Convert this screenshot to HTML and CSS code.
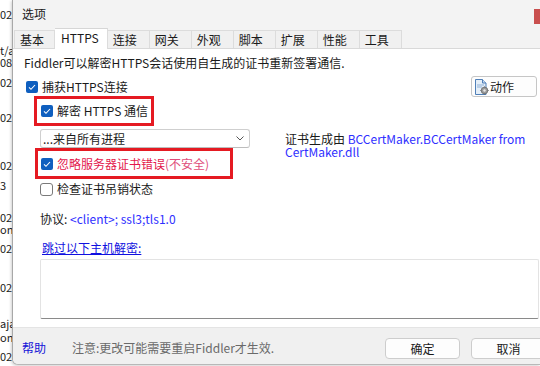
FILE: index.html
```html
<!DOCTYPE html>
<html lang="zh">
<head>
<meta charset="utf-8">
<title>选项</title>
<link rel="stylesheet" href="styles.css">
</head>
<body>
<div class="screen">
  <div class="bgwin">
    <div class="bgl g8">02</div>
    <div class="bgl g24">t/a</div>
    <div class="bgl g0">08A</div>
    <div class="bgl g8">02</div>
    <div class="bgl g23">02</div>
    <div class="bgl g36">02</div>
    <div class="bgl g8">3</div>
    <div class="bgl g20">02</div>
    <div class="bgl g0">on/</div>
    <div class="bgl g7">02</div>
    <div class="bgl g27">02</div>
    <div class="bgl g24">aja</div>
    <div class="bgl g2">on/</div>
    <div class="bgl g7">02</div>
  </div>
  <div class="dialog">
    <div class="titlebar">
      <span class="title">选项</span>
      <span class="close"></span>
    </div>
    <div class="tabs">
      <div class="tab first">基本</div>
      <div class="tab active">HTTPS</div>
      <div class="tab">连接</div>
      <div class="tab">网关</div>
      <div class="tab">外观</div>
      <div class="tab">脚本</div>
      <div class="tab">扩展</div>
      <div class="tab">性能</div>
      <div class="tab">工具</div>
    </div>
    <div class="panel">
      <div class="intro">Fiddler可以解密HTTPS会话使用自生成的证书重新签署通信.</div>
      <div class="caprow">
        <label class="chk">
          <span class="box on"><svg viewBox="0 0 12 12" width="12" height="12"><polyline points="3,6.3 5,8.3 9,4" fill="none" stroke="#fff" stroke-width="1.1"/></svg></span>
          <span>捕获HTTPS连接</span>
        </label>
        <button class="action">
          <svg class="acticon" viewBox="0 0 15 16" width="15" height="16">
            <path d="M1.5 0.5 H8.5 L12 4 V15.5 H1.5 Z" fill="#e4eef8" stroke="#4f7fb8"/>
            <path d="M8.5 0.5 V4 H12" fill="#c9daee" stroke="#4f7fb8"/>
            <path d="M3 6 H10 M3 8 H8" stroke="#8fb0d6"/>
            <circle cx="10.5" cy="11.5" r="3.3" fill="#9a9a9a" stroke="#6a6a6a" stroke-width="0.8"/>
            <circle cx="10.5" cy="11.5" r="1.2" fill="#e8e8e8"/>
            <path d="M10.5 7.4 V8.4 M10.5 14.6 V15.6 M6.4 11.5 H7.4 M13.6 11.5 H14.6" stroke="#6a6a6a" stroke-width="1.2"/>
          </svg>
          <span>动作</span>
        </button>
      </div>
      <div class="mid">
        <div class="leftcol">
          <div class="redbox rb1">
            <label class="chk">
              <span class="box on"><svg viewBox="0 0 12 12" width="12" height="12"><polyline points="3,6.3 5,8.3 9,4" fill="none" stroke="#fff" stroke-width="1.1"/></svg></span>
              <span>解密 HTTPS 通信</span>
            </label>
          </div>
          <div class="select">
            <span>...来自所有进程</span>
            <svg class="chev" viewBox="0 0 8 5" width="8" height="5"><polyline points="0.5,0.5 4,4 7.5,0.5" fill="none" stroke="#555" stroke-width="1"/></svg>
          </div>
          <div class="redbox rb2">
            <label class="chk danger">
              <span class="box on"><svg viewBox="0 0 12 12" width="12" height="12"><polyline points="3,6.3 5,8.3 9,4" fill="none" stroke="#fff" stroke-width="1.1"/></svg></span>
              <span>忽略服务器证书错误<span class="paren">(不安全)</span></span>
            </label>
          </div>
          <label class="chk plainrow">
            <span class="box off"></span>
            <span>检查证书吊销状态</span>
          </label>
        </div>
        <div class="cert">
          <div class="certline">证书生成由 <span class="blue">BCCertMaker.BCCertMaker from</span></div>
          <div class="certline blue">CertMaker.dll</div>
        </div>
      </div>
      <div class="proto">协议: <span class="blue">&lt;client&gt;; ssl3;tls1.0</span></div>
      <a class="skip" href="#">跳过以下主机解密:</a>
      <div class="textarea"></div>
    </div>
    <div class="footer">
      <a class="help" href="#">帮助</a>
      <span class="note">注意:更改可能需要重启Fiddler才生效.</span>
      <div class="btns">
        <button class="btn">确定</button>
        <button class="btn">取消</button>
      </div>
    </div>
  </div>
</div>
</body>
</html>
```

FILE: styles.css
```css
html, body {
  margin: 0;
  padding: 0;
}
body {
  width: 540px;
  height: 366px;
  overflow: hidden;
  background: #ffffff;
  font-family: "Noto Sans CJK SC", "Noto Sans", sans-serif;
  font-size: 12px;
  color: #1a1a1a;
}
.screen {
  display: flex;
  width: 540px;
  height: 366px;
}
.bgwin {
  flex: 0 0 12px;
  width: 12px;
  overflow: hidden;
  display: flex;
  flex-direction: column;
  font-size: 11px;
  line-height: 12px;
  white-space: nowrap;
  color: #222;
}
.bgl { height: 12px; }
.g0 { margin-top: 0; }
.g2 { margin-top: 2px; }
.g7 { margin-top: 7px; }
.g8 { margin-top: 8px; }
.g20 { margin-top: 20px; }
.g23 { margin-top: 23px; }
.g24 { margin-top: 24px; }
.g27 { margin-top: 27px; }
.g36 { margin-top: 36px; }

.dialog {
  flex: 1;
  height: 364px;
  display: flex;
  flex-direction: column;
  border-left: 1px solid #a8a8a8;
  border-bottom: 1px solid #b8b8b8;
  border-bottom-left-radius: 6px;
  box-shadow: -1px 1px 3px rgba(0,0,0,0.18);
  overflow: hidden;
  background: #f3f3f3;
}
.titlebar {
  height: 28px;
  flex: 0 0 28px;
  display: flex;
  align-items: center;
  padding-left: 9px;
  background: #f3f3f3;
}
.title {
  padding-bottom: 2px;
  color: #1a1a1a;
}
.close {
  margin-left: auto;
  align-self: flex-start;
  margin-top: 9px;
  width: 6px;
  height: 15px;
  background: #c94f4e;
}
.tabs {
  flex: 0 0 20px;
  height: 20px;
  display: flex;
  align-items: flex-end;
  padding-left: 1px;
  background: #f3f3f3;
}
.tab {
  height: 18px;
  box-sizing: border-box;
  line-height: 17px;
  padding: 0 12px 0 5px;
  background: #f0f0f0;
  border-top: 1px solid #dcdcdc;
  border-right: 1px solid #dcdcdc;
  color: #1a1a1a;
}
.tab.first { border-left: 1px solid #dcdcdc; padding-right: 10px; }
.tab.active {
  position: relative;
  z-index: 1;
  height: 21px;
  margin-bottom: -1px;
  line-height: 17px;
  padding: 0 8px 0 6px;
  background: #ffffff;
  border-top: 1px solid #d6d6d6;
}
.panel {
  flex: 1;
  background: #ffffff;
  border-top: 1px solid #d9d9d9;
  padding: 0 1px 0 11px;
  display: flex;
  flex-direction: column;
}
.intro {
  margin-top: 6px;
  line-height: 16px;
  height: 16px;
  white-space: nowrap;
}
.caprow {
  margin-top: 5px;
  height: 21px;
  display: flex;
  align-items: center;
  padding-left: 2px;
}
.chk {
  display: flex;
  align-items: center;
  gap: 4px;
  line-height: 16px;
  white-space: nowrap;
}
.box {
  width: 12px;
  height: 12px;
  box-sizing: border-box;
  border-radius: 2px;
  display: block;
  flex: 0 0 12px;
}
.box svg { display: block; }
.box.on { background: #0f5fbf; }
.box.off {
  width: 13px;
  height: 13px;
  flex-basis: 13px;
  background: #ffffff;
  border: 1px solid #7a7a7a;
  border-radius: 3px;
}
.action {
  margin-left: auto;
  margin-right: 2px;
  width: 66px;
  height: 21px;
  box-sizing: border-box;
  border: 1px solid #c6c6c6;
  border-radius: 3px;
  background: #fdfdfd;
  display: flex;
  align-items: center;
  gap: 1px;
  padding: 0 0 0 2px;
  font-family: inherit;
  font-size: 12px;
  color: #1a1a1a;
}
.acticon { display: block; }
.mid {
  margin-top: -1px;
  display: flex;
}
.leftcol {
  flex: 0 0 261px;
  display: flex;
  flex-direction: column;
  align-items: flex-start;
}
.redbox {
  border: 3px solid #e51a22;
  box-sizing: border-box;
  display: flex;
  align-items: center;
}
.rb1 {
  margin-left: 10px;
  height: 30px;
  padding: 0 3px 0 4px;
}
.rb2 {
  margin-left: 11px;
  width: 198px;
  height: 31px;
  padding: 0 0 0 3px;
}
.select {
  margin-top: 3px;
  margin-left: 16px;
  width: 210px;
  height: 19px;
  box-sizing: border-box;
  border: 1px solid #cfcfcf;
  border-bottom-color: #bdbdbd;
  border-radius: 3px;
  display: flex;
  align-items: center;
  padding: 0 5px 0 2px;
  white-space: nowrap;
}
.chev { margin-left: auto; display: block; }
.danger { color: #e3174c; }
.paren { color: #e04d7a; }
.plainrow {
  margin-top: 2px;
  margin-left: 16px;
  gap: 4px;
}
.cert {
  margin-top: 36px;
  white-space: nowrap;
}
.certline {
  height: 13px;
  line-height: 13px;
}
.blue { color: #2f2fff; }
.proto {
  margin-top: 14px;
  margin-left: 16px;
  line-height: 16px;
}
.skip {
  margin-top: 13px;
  margin-left: 18px;
  line-height: 16px;
  color: #1010e0;
  text-decoration: underline;
  align-self: flex-start;
}
.textarea {
  margin-top: 3px;
  margin-left: 16px;
  height: 60px;
  box-sizing: border-box;
  border: 1px solid #e3e3e3;
  border-bottom: 1px solid #8a8a8a;
  border-radius: 2px;
  background: #ffffff;
}
.footer {
  flex: 0 0 37px;
  height: 37px;
  box-sizing: border-box;
  background: #f0f0f0;
  border-top: 1px solid #e4e4e4;
  display: flex;
  align-items: flex-start;
  padding: 10px 0 0 9px;
}
.help {
  line-height: 20px;
  color: #1414d8;
  text-decoration: none;
}
.note {
  margin-left: 26px;
  line-height: 20px;
  color: #6a6a6a;
  white-space: nowrap;
}
.btns {
  margin-left: auto;
  margin-right: -6px;
  display: flex;
  gap: 11px;
}
.btn {
  width: 75px;
  height: 21px;
  box-sizing: border-box;
  border: 1px solid #cdcdcd;
  border-radius: 4px;
  background: #fdfdfd;
  font-family: inherit;
  font-size: 12px;
  color: #1a1a1a;
  padding: 0;
}
```
